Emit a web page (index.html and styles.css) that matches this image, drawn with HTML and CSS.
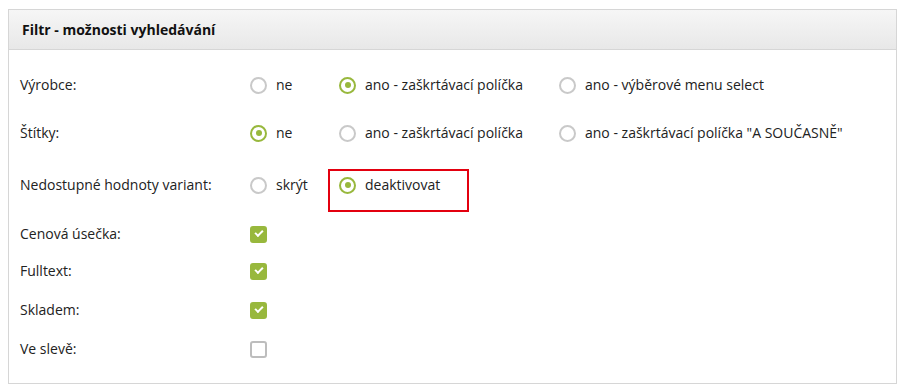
FILE: index.html
```html
<!DOCTYPE html>
<html lang="cs">
  <head>
    <meta charset="utf-8" />
    <title>Filtr - možnosti vyhledávání</title>
    <link rel="stylesheet" href="styles.css">
  </head>
  <body>
    <div class="panel">
      <div class="panel-head">Filtr - možnosti vyhledávání</div>
      <div class="panel-body">
        <div class="label">Výrobce:</div>
        <div class="options">
          <label class="opt"><span class="radio"></span>ne</label>
          <label class="opt"><span class="radio on"></span>ano - zaškrtávací políčka</label>
          <label class="opt"><span class="radio"></span>ano - výběrové menu select</label>
        </div>

        <div class="label">Štítky:</div>
        <div class="options">
          <label class="opt"><span class="radio on"></span>ne</label>
          <label class="opt"><span class="radio"></span>ano - zaškrtávací políčka</label>
          <label class="opt"><span class="radio"></span>ano - zaškrtávací políčka "A SOUČASNĚ"</label>
        </div>

        <div class="label">Nedostupné hodnoty variant:</div>
        <div class="options">
          <label class="opt"><span class="radio"></span>skrýt</label>
          <label class="opt marked"><span class="radio on"></span>deaktivovat<span class="highlight"></span></label>
        </div>

        <div class="label">Cenová úsečka:</div>
        <div class="options"><span class="check on"></span></div>

        <div class="label">Fulltext:</div>
        <div class="options"><span class="check on"></span></div>

        <div class="label">Skladem:</div>
        <div class="options"><span class="check on"></span></div>

        <div class="label">Ve slevě:</div>
        <div class="options"><span class="check"></span></div>
      </div>
    </div>
  </body>
</html>
```

FILE: styles.css
```css
body, html {
  margin: 0;
  padding: 0;
  background-color: #fff;
  font-family: "Open Sans", "Noto Sans", sans-serif;
  font-size: 14px;
  color: #222;
}
body {
  padding: 9px 13px 0 8px;
}
.panel {
  border: 1px solid #d6d6d6;
  width: 887px;
}
.panel-head {
  height: 39px;
  line-height: 39px;
  padding-left: 13px;
  font-weight: bold;
  color: #111;
  background: linear-gradient(#f6f6f6, #e8e8e8);
  border-bottom: 1px solid #d6d6d6;
}
.panel-body {
  display: grid;
  grid-template-columns: 230px 1fr;
  grid-template-rows: 48px 52px 49px 37px 39px 39px 20px;
  padding: 25px 0 24px 11px;
  line-height: 20px;
}
.options {
  display: grid;
  grid-template-columns: 89px 220px auto;
  align-items: start;
}
.opt {
  display: flex;
  align-items: center;
  height: 20px;
  position: relative;
}
.radio {
  width: 13px;
  height: 13px;
  border: 2px solid #c9c9c9;
  border-radius: 50%;
  margin-right: 9px;
  position: relative;
}
.radio.on {
  border-color: #98b83d;
}
.radio.on::after {
  content: "";
  position: absolute;
  left: 3.5px;
  top: 3.5px;
  width: 6px;
  height: 6px;
  border-radius: 50%;
  background: #98b83d;
}
.check {
  display: block;
  width: 13px;
  height: 13px;
  margin-top: 2px;
  border: 2px solid #bdbdbd;
  border-radius: 3px;
  position: relative;
}
.check.on {
  border-color: #98b83d;
  background: #98b83d;
}
.check.on::after {
  content: "";
  position: absolute;
  left: 3px;
  top: 2px;
  width: 6px;
  height: 3px;
  border-left: 2px solid #fff;
  border-bottom: 2px solid #fff;
  transform: rotate(-45deg);
}
.highlight {
  position: absolute;
  left: -11px;
  top: -6px;
  width: 137px;
  height: 39px;
  border: 2px solid #e3000f;
}
```
